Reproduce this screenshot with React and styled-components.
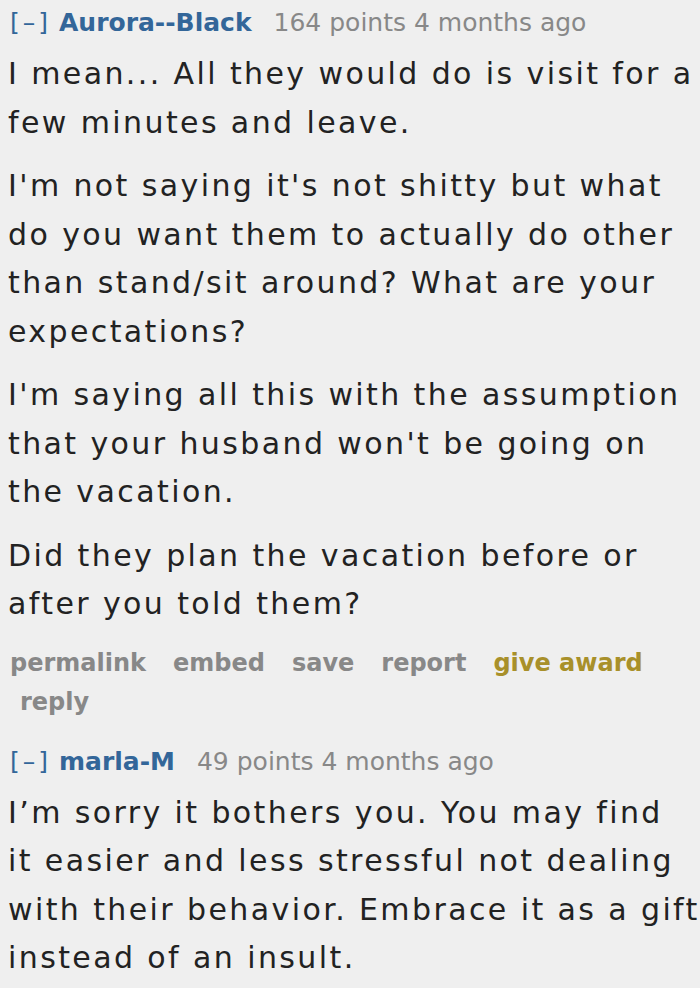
import React from 'react';
import styled, { createGlobalStyle } from 'styled-components';

const Global = createGlobalStyle`
  body {
    margin: 0;
    background: #efefef;
  }
`;

const Page = styled.div`
  width: 700px;
  height: 988px;
  overflow: hidden;
  background: #efefef;
  padding: 0 0 0 8px;
  box-sizing: border-box;
`;

const Comment = styled.div`
  margin-bottom: ${p => p.gap || 0}px;
`;

const Tagline = styled.div`
  font-family: 'DejaVu Sans', Verdana, sans-serif;
  font-size: 25px;
  line-height: 46px;
  margin-bottom: 4px;
  color: #888;
  white-space: nowrap;
`;

const Toggle = styled.span`
  color: #369;
  margin-left: 2px;
  margin-right: 8px;
  letter-spacing: 3px;
`;

const Author = styled.span`
  color: #336699;
  font-weight: bold;
  margin-right: 22px;
`;

const Body = styled.div`
  font-family: 'DejaVu Sans', Verdana, sans-serif;
  font-size: 30px;
  line-height: 48.5px;
  letter-spacing: 2.4px;
  color: #222;
`;

const Para = styled.p`
  margin: 0 0 15px 0;
`;

const Buttons = styled.ul`
  list-style: none;
  margin: 0;
  padding: 0 0 0 2px;
  font-family: 'DejaVu Sans', Verdana, sans-serif;
  font-weight: bold;
  font-size: 24px;
  line-height: 39px;
  display: flex;
  flex-wrap: wrap;
  width: 660px;
`;

const Button = styled.li`
  color: ${p => (p.gold ? '#a8902a' : '#888')};
  margin-right: 27px;
  &:last-child {
    margin-left: 10px;
  }
`;

export default function App() {
  return (
    <>
      <Global />
      <Page>
        <Comment gap={17}>
          <Tagline>
            <Toggle>[–]</Toggle>
            <Author>Aurora--Black</Author>
            164 points 4 months ago
          </Tagline>
          <Body>
            <Para>I mean... All they would do is visit for a few minutes and leave.</Para>
            <Para>
              I'm not saying it's not shitty but what do you want them to actually do other than
              stand/sit around? What are your expectations?
            </Para>
            <Para>
              I'm saying all this with the assumption that your husband won't be going on the
              vacation.
            </Para>
            <Para>Did they plan the vacation before or after you told them?</Para>
          </Body>
          <Buttons>
            <Button>permalink</Button>
            <Button>embed</Button>
            <Button>save</Button>
            <Button>report</Button>
            <Button gold>give award</Button>
            <Button>reply</Button>
          </Buttons>
        </Comment>
        <Comment>
          <Tagline>
            <Toggle>[–]</Toggle>
            <Author>marla-M</Author>
            49 points 4 months ago
          </Tagline>
          <Body>
            <Para>
              {'I’m sorry it bothers you. You may find it\u00a0easier and less stressful not dealing with their behavior. Embrace it as a gift instead of an insult.'}
            </Para>
          </Body>
        </Comment>
      </Page>
    </>
  );
}
